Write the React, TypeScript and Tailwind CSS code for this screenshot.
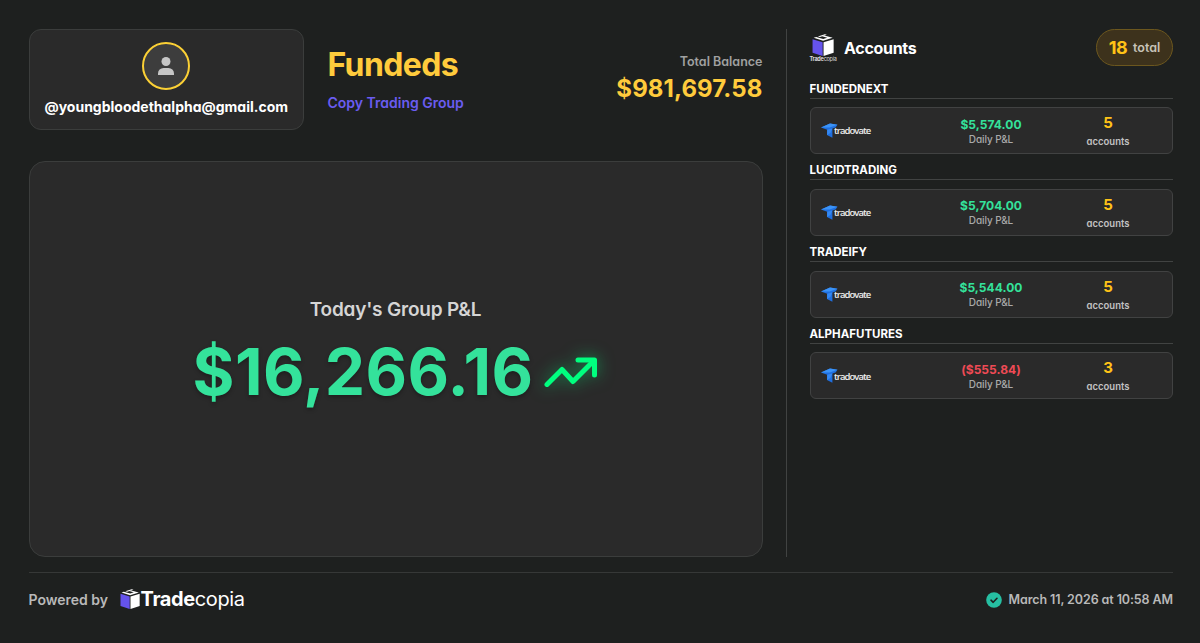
import React from 'react';

interface Firm {
  name: string;
  pnl: string;
  loss?: boolean;
  accounts: number;
}

const firms: Firm[] = [
  { name: 'FUNDEDNEXT', pnl: '$5,574.00', accounts: 5 },
  { name: 'LUCIDTRADING', pnl: '$5,704.00', accounts: 5 },
  { name: 'TRADEIFY', pnl: '$5,544.00', accounts: 5 },
  { name: 'ALPHAFUTURES', pnl: '($555.84)', loss: true, accounts: 3 },
];

function CubeLogo({ className }: { className: string }) {
  return (
    <svg viewBox="0 0 24 24" className={className}>
      <path d="M.6 5.8 11.6 9V24L.6 20.4Z" fill="#6553ec" />
      <path d="M12.6 9 23.6 5.8V20.4L12.6 24Z" fill="#fff" />
      <path d="M1.8 4.2 4.6 3.3 12.2 5.4 16.6 4 11 2.5 13.4 1.700 22.600 4.200 12.100 7.400Z" fill="#fff" />
      <path d="M6.400 2.800 14 .2 16.200 .9 8.600 3.400Z" fill="#fff" />
    </svg>
  );
}

function TradovateLogo() {
  return (
    <div className="flex h-4 w-[50px] items-center">
      <svg viewBox="0 0 17 15" className="h-[15px] w-[17px] shrink-0">
        <path d="M0 4.4 9 .4 16.5 1.8 14.6 4.6 11.4 5.4 11.4 14.8 6 12 6.2 6.8Z" fill="#1f6fe0" />
        <path d="M0 4.4 9 .4 16.5 1.8 8.6 4.4Z" fill="#3b93f7" />
        <path d="M6.2 6.8 11.4 5.4 9.4 10 6 12Z" fill="#3488f2" />
      </svg>
      <span className="-ml-[4px] mt-[1px] font-['Open_Sans',sans-serif] text-[9.5px] leading-none font-semibold tracking-[-0.95px] text-[#eee]">
        tradovate
      </span>
    </div>
  );
}

function FirmRow({ firm }: { firm: Firm }) {
  return (
    <div className="h-[81.75px]">
      <h3 className="h-[18px] border-b border-[#414342] text-[11.5px] leading-[17px] font-bold text-white">
        {firm.name}
      </h3>
      <div className="mt-[8.5px] flex h-[47px] items-center rounded-[6px] border border-[#414242] bg-[#2a2a2a] pl-[10.5px]">
        <div className="w-[109px]">
          <TradovateLogo />
        </div>
        <div className="w-[122px] text-center">
          <p className={`mt-px text-[12px] leading-[15px] font-bold tracking-[0.05px] ${firm.loss ? 'text-[#ef4a55]' : 'text-[#34e29b]'}`}>
            {firm.pnl}
          </p>
          <p className="text-[10px] leading-[14px] font-medium tracking-[-0.1px] text-[#a9a9a9]">Daily P&amp;L</p>
        </div>
        <div className="w-[112px] pt-[2px] text-center">
          <p className="text-[15px] leading-[18px] font-bold text-[#ffc317]">{firm.accounts}</p>
          <p className="mt-[3px] text-[9.5px] leading-[14px] font-semibold text-[#c2c2c2]">accounts</p>
        </div>
      </div>
    </div>
  );
}

export default function App() {
  return (
    <div className="flex h-[643px] w-[1200px] flex-col overflow-hidden bg-[#1e201f] pr-[27px] pl-[28.5px] pt-[29px] font-['Inter',sans-serif] whitespace-nowrap [font-feature-settings:'cv11']">
      <div className="flex h-[528px]">
        <main className="flex w-[734px] flex-col">
          <header className="flex h-[101px] items-center">
            <div className="flex h-[101px] w-[275.5px] flex-col items-center rounded-xl border border-[#3b3d3c] bg-[#2a2a2a] pt-[12px]">
              <div className="flex size-12 items-center justify-center rounded-full border-2 border-[#fbd035] bg-[#3d3d3d]">
                <svg viewBox="0 0 16 18" className="h-[18px] w-4" fill="#c6c6c6">
                  <circle cx="8" cy="4.5" r="4.5" />
                  <path d="M0 18V16.5a5.5 5.5 0 0 1 5.5-5.5h5A5.5 5.5 0 0 1 16 16.5V18Z" />
                </svg>
              </div>
              <p className="mt-[8px] text-[14px] leading-[18px] font-bold text-white">@youngbloodethalpha@gmail.com</p>
            </div>
            <div className="-mt-px ml-[23.5px] flex-1">
              <h1 className="text-[32px] leading-[40px] font-bold tracking-[-0.6px] text-[#ffcb3c]">Fundeds</h1>
              <p className="mt-[8.5px] text-[14px] leading-[20px] font-semibold text-[#6a5cf0]">Copy Trading Group</p>
            </div>
            <div className="text-right">
              <p className="text-[12.5px] leading-[18px] font-semibold text-[#a0a1a1]">Total Balance</p>
              <p className="text-[24px] leading-[35px] font-bold tracking-[0.1px] text-[#ffcb3c]">$981,697.58</p>
            </div>
          </header>

          <section className="mt-[30.5px] flex h-[396.5px] flex-col items-center rounded-[16px] border border-[#3b3d3c] bg-[#2a2a2a] pt-[134px]">
            <h2 className="text-[19px] leading-[28px] font-semibold tracking-[-0.2px] text-[#d5d5d5]">Today's Group P&amp;L</h2>
            <div className="mt-[8px] flex items-center">
              <p className="text-[64px] leading-[80px] font-bold tracking-[0.4px] text-[#34e29b] [text-shadow:0_2px_4px_rgba(0,0,0,0.3)]">
                $16,266.16
              </p>
              <svg
                viewBox="0 0 54 32"
                className="ml-[11px] h-8 w-[54px] overflow-visible drop-shadow-[0_0_8px_rgba(0,255,127,0.5)]"
                fill="none"
                stroke="#00ff7f"
                strokeWidth="5"
                strokeLinecap="round"
                strokeLinejoin="round"
              >
                <path d="M3 28.5 18 13.5 29 25.5 49 5.5" />
                <path d="M34 4H50.5V19" />
              </svg>
            </div>
          </section>
        </main>

        <aside className="ml-[23.5px] w-[387px] border-l border-[#414342] pl-[22.5px]">
          <div className="flex h-[37px] items-center">
            <div className="flex w-[27px] flex-col items-center">
              <CubeLogo className="h-[22px] w-6" />
              <span className="text-[5.5px] leading-[6px] tracking-[-0.25px] text-[#ddd] [font-feature-settings:normal]">
                <b>Trade</b>copia
              </span>
            </div>
            <h2 className="ml-[7.5px] flex-1 text-[16px] leading-[22px] font-bold tracking-[-0.3px] text-white">Accounts</h2>
            <div className="flex h-[37px] w-[77px] items-center justify-center gap-[6px] rounded-full border border-[#6c571e] bg-[#3d321c]">
              <span className="text-[18px] font-bold tracking-[-0.6px] text-[#ffc317]">18</span>
              <span className="pt-px text-[12.5px] font-semibold text-[#c8c3b8]">total</span>
            </div>
          </div>
          <div className="mt-[14.5px]">
            {firms.map((firm) => (
              <FirmRow key={firm.name} firm={firm} />
            ))}
          </div>
        </aside>
      </div>

      <footer className="mt-[15px] flex h-[54px] items-center border-t border-[#363837]">
        <span className="text-[14px] font-semibold text-[#b9b9b9]">Powered by</span>
        <CubeLogo className="-mt-[2px] ml-[10.5px] h-[20px] w-[22px]" />
        <span className="-mt-px text-[20px] tracking-[-0.4px] text-white [font-feature-settings:normal]">
          <b className="font-bold">Trade</b>copia
        </span>
        <div className="ml-auto flex items-center gap-[7px]">
          <svg viewBox="0 0 16 16" className="size-4">
            <circle cx="8" cy="8" r="7.8" fill="#26bfa2" />
            <path d="M5 8.2 7.2 10.3 11 6.3" fill="none" stroke="#1e201f" strokeWidth="1.6" strokeLinecap="round" strokeLinejoin="round" />
          </svg>
          <span className="pt-[2px] text-[12.5px] font-semibold tracking-[-0.1px] text-[#b9b9b9]">March 11, 2026 at 10:58 AM</span>
        </div>
      </footer>
    </div>
  );
}
